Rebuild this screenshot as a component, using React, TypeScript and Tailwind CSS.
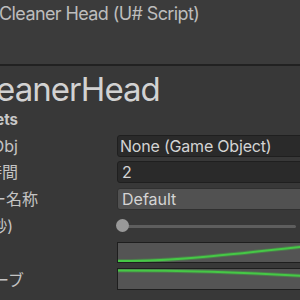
import React from "react";

const latin = { fontFamily: 'Inter, "Noto Sans CJK JP", sans-serif' };

function Label({ text, end }: { text: string; end: number }) {
  return (
    <div className="w-[117px] shrink-0 flex items-center">
      <div
        className="flex justify-end overflow-hidden whitespace-nowrap text-[16px] text-[#c4c4c4]"
        style={{ width: end }}
      >
        <span className="shrink-0">{text}</span>
      </div>
    </div>
  );
}

export default function App() {
  return (
    <div
      className="w-[300px] h-[300px] overflow-hidden bg-[#383838] flex flex-col"
      style={latin}
    >
      {/* header */}
      <div className="h-[64px] shrink-0 bg-[#3b3b3b] pt-[2px] overflow-hidden">
        <div className="text-[18px] leading-[24px] tracking-[-0.6px] text-[#bdbdbd] whitespace-nowrap -ml-[1px]">
          Cleaner Head (U# Script)
        </div>
      </div>
      <div className="h-[2px] shrink-0 bg-[#212121]" />

      {/* title */}
      <div className="h-[44px] shrink-0 pt-[2px] overflow-hidden">
        <div className="text-[33px] leading-[42px] tracking-[-1px] text-[#d2d2d2] whitespace-nowrap -ml-[34px]">
          CleanerHead
        </div>
      </div>

      {/* section */}
      <div className="h-[25px] shrink-0 flex">
        <div className="w-[18px] flex justify-end overflow-hidden whitespace-nowrap">
          <span className="shrink-0 text-[15px] leading-[20px] font-bold text-[#c8c8c8]">
            Targets
          </span>
        </div>
      </div>

      {/* row 1 */}
      <div className="h-[22px] shrink-0 flex">
        <Label text="Target Obj" end={18} />
        <div className="w-[200px] shrink-0 rounded-[3px] bg-[#2a2a2a] border border-[#1f1f1f] flex items-center pl-[2px] text-[16px] tracking-[-0.2px] text-[#d4d4d4] whitespace-nowrap">
          None (Game Object)
        </div>
      </div>

      {/* row 2 */}
      <div className="h-[22px] shrink-0 flex mt-[4px]">
        <Label text="待機時間" end={18} />
        <div className="w-[200px] shrink-0 rounded-[3px] bg-[#2a2a2a] border border-[#1f1f1f] flex items-center pl-[4px] text-[16px] text-[#d4d4d4]">
          2
        </div>
      </div>

      {/* row 3 */}
      <div className="h-[22px] shrink-0 flex mt-[5px]">
        <Label text="レイヤー名称" end={38} />
        <div className="w-[200px] shrink-0 rounded-[3px] bg-[#515151] border border-[#303030] flex items-center pl-[4px] text-[16px] text-[#d4d4d4]">
          Default
        </div>
      </div>

      {/* row 4 slider */}
      <div className="h-[20px] shrink-0 flex mt-[6px]">
        <Label text="間隔(秒)" end={13} />
        <div className="w-[180px] shrink-0 flex items-center relative">
          <div className="ml-[5px] w-[174px] h-[3px] bg-[#5e5e5e] rounded-full" />
          <div className="absolute left-[-1px] top-[3px] w-[13px] h-[13px] rounded-full bg-[#999999]" />
        </div>
      </div>

      {/* row 5 curve */}
      <div className="h-[21px] shrink-0 flex mt-[6px]">
        <div className="w-[117px] shrink-0" />
        <div className="w-[200px] shrink-0 bg-[#545454] border border-[#1e1e1e] overflow-hidden">
          <svg width="200" height="19" viewBox="0 0 200 19">
            <path d="M0 18 C 50 18.5, 110 12, 200 2" fill="none" stroke="#3fbf3f" strokeOpacity="0.35" strokeWidth="4" />
            <path d="M0 18 C 50 18.5, 110 12, 200 2" fill="none" stroke="#46c846" strokeWidth="2" />
          </svg>
        </div>
      </div>

      {/* row 6 curve */}
      <div className="h-[22px] shrink-0 flex mt-[5px]">
        <div className="w-[117px] shrink-0 flex items-start">
          <div className="w-[24px] flex justify-end overflow-hidden whitespace-nowrap text-[16px] text-[#c4c4c4]">
            <span className="shrink-0">カーブ</span>
          </div>
        </div>
        <div className="w-[200px] shrink-0 bg-[#545454] border border-[#1e1e1e] overflow-hidden">
          <svg width="200" height="20" viewBox="0 0 200 20">
            <path d="M0 1.5 C 60 1.5, 120 2.5, 200 8" fill="none" stroke="#3fbf3f" strokeOpacity="0.35" strokeWidth="4" />
            <path d="M0 1.5 C 60 1.5, 120 2.5, 200 8" fill="none" stroke="#46c846" strokeWidth="2" />
          </svg>
        </div>
      </div>
    </div>
  );
}
